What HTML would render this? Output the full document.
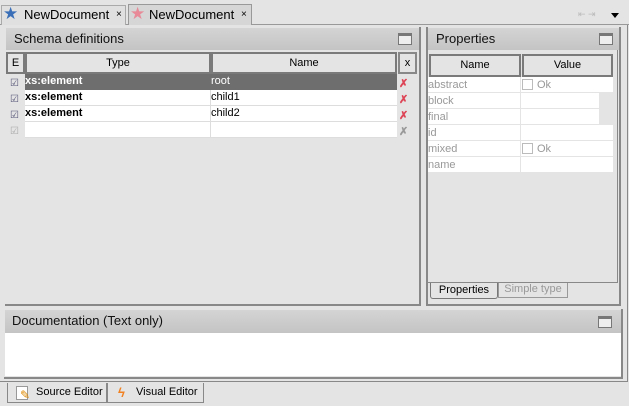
<!DOCTYPE html>
<html><head><style>
*{box-sizing:border-box;margin:0;padding:0}
body{width:629px;height:406px;background:#e4e4e4;font-family:"Liberation Sans",sans-serif;font-size:12px;position:relative;overflow:hidden;color:#000}
.a{position:absolute;white-space:nowrap}
.hdr{background:linear-gradient(#d4d4d4,#c4c4c4);font-size:13px;padding:3px 0 0 8px;color:#111}
.maxi{position:absolute;width:14px;height:12px;border:1px solid #777;border-top:3px solid #777;background:#eee}
.th{position:absolute;background:#e4e4e4;border:2px solid #7a7a7a;text-align:center;font-size:11px;line-height:18px}
.g{color:#999}
.cb{display:inline-block;width:11px;height:11px;border:1px solid #bbb;vertical-align:-2px;margin:0 4px 0 1px}
</style></head><body>
<!-- top tabs -->
<div class="a" style="left:0;top:24px;width:629px;height:1px;background:#999"></div>
<div class="a" style="left:1px;top:5px;width:125px;height:20px;background:#e0e0e0;border:1px solid #aaa;border-bottom:none;font-size:13px;line-height:18px;padding-left:22px">NewDocument<span style="position:absolute;left:114px;font-size:10px">×</span></div>
<div class="a" style="left:3px;top:4px;font-size:17px;color:#3a6fb8">★</div>
<div class="a" style="left:128px;top:4px;width:124px;height:21px;background:#d6d6d6;border:1px solid #999;border-bottom:none;font-size:13px;line-height:19px;padding-left:20px">NewDocument<span style="position:absolute;left:112px;font-size:10px">×</span></div>
<div class="a" style="left:130px;top:4px;font-size:17px;color:#e88a98">★</div>
<div class="a" style="left:578px;top:9px;font-size:9px;color:#bbb">⇤ ⇥</div>
<div class="a" style="left:611px;top:13px;width:0;height:0;border-left:4px solid transparent;border-right:4px solid transparent;border-top:5px solid #000"></div>
<!-- outer content -->
<div class="a" style="left:0;top:25px;width:628px;height:357px;border-right:1px solid #888;border-bottom:1px solid #888"></div>
<!-- schema panel -->
<div class="a" style="left:5px;top:27px;width:416px;height:279px;border-right:2px solid #888;border-bottom:2px solid #888"></div>
<div class="a hdr" style="left:6px;top:28px;width:413px;height:22px">Schema definitions</div>
<div class="maxi" style="left:398px;top:33px"></div>
<div class="th" style="left:6px;top:52px;width:19px;height:22px">E</div>
<div class="th" style="left:25px;top:52px;width:186px;height:22px">Type</div>
<div class="th" style="left:211px;top:52px;width:186px;height:22px">Name</div>
<div class="th" style="left:398px;top:52px;width:19px;height:22px;border-color:#888">x</div>
<div class="a" style="left:25px;top:74px;width:372px;height:16px;background:#6e6e6e;color:#fff;font-size:11px;line-height:15px"><b>xs:element</b><span style="position:absolute;left:186px">root</span></div>
<div class="a" style="left:25px;top:90px;width:372px;height:48px;background:#fff;font-size:11px;line-height:15px">
<div style="height:16px;border-bottom:1px solid #ddd"><b>xs:element</b><span style="position:absolute;left:186px">child1</span></div>
<div style="height:16px;border-bottom:1px solid #ddd;position:relative"><b>xs:element</b><span style="position:absolute;left:186px">child2</span></div>
<div style="height:16px;border-bottom:1px solid #ddd"></div>
<div class="a" style="left:185px;top:0;width:1px;height:48px;background:#ddd"></div>
</div>
<div class="a" style="left:10px;top:76px;font-size:10px;color:#557;line-height:16px">☑<br>☑<br>☑<br><span style="color:#aaa">☑</span></div>
<div class="a" style="left:399px;top:76px;font-size:11px;color:#d45;line-height:16px;font-weight:bold">✗<br>✗<br>✗<br><span style="color:#999">✗</span></div>
<!-- properties panel -->
<div class="a" style="left:426px;top:27px;width:195px;height:279px;border-left:2px solid #888;border-right:2px solid #888;border-bottom:2px solid #888"></div>
<div class="a hdr" style="left:428px;top:28px;width:191px;height:22px">Properties</div>
<div class="maxi" style="left:599px;top:33px"></div>
<div class="a" style="left:426px;top:50px;width:192px;height:233px;border-bottom:1px solid #888;border-right:1px solid #888"></div>
<div class="th" style="left:429px;top:54px;width:92px;height:23px">Name</div>
<div class="th" style="left:522px;top:54px;width:91px;height:23px">Value</div>
<div class="a g" style="left:428px;top:77px;width:185px;font-size:11px;line-height:16px">
<div style="height:16px;background:#fff;border-bottom:1px solid #e4e4e4;position:relative">abstract<span style="position:absolute;left:93px;top:0"><span class="cb"></span>Ok</span></div>
<div style="height:16px;background:#fff;border-bottom:1px solid #e4e4e4;position:relative">block<span style="position:absolute;right:0;width:14px;height:16px;background:#e4e4e4"></span></div>
<div style="height:16px;background:#fff;border-bottom:1px solid #e4e4e4;position:relative">final<span style="position:absolute;right:0;width:14px;height:16px;background:#e4e4e4"></span></div>
<div style="height:16px;background:#fff;border-bottom:1px solid #e4e4e4">id</div>
<div style="height:16px;background:#fff;border-bottom:1px solid #e4e4e4;position:relative">mixed<span style="position:absolute;left:93px;top:0"><span class="cb"></span>Ok</span></div>
<div style="height:16px;background:#fff;border-bottom:1px solid #e4e4e4">name</div>
<div class="a" style="left:92px;top:0;width:1px;height:96px;background:#e4e4e4"></div>
</div>
<div class="a" style="left:430px;top:283px;width:68px;height:16px;border:1px solid #777;border-top:none;border-radius:0 0 3px 3px;font-size:11px;line-height:15px;text-align:center">Properties</div>
<div class="a" style="left:498px;top:283px;width:70px;height:15px;border:1px solid #999;border-top:none;font-size:11px;line-height:13px;text-align:center;color:#999">Simple type</div>
<!-- documentation -->
<div class="a" style="left:4px;top:309px;width:619px;height:70px;border-right:2px solid #888;border-bottom:2px solid #888"></div>
<div class="a hdr" style="left:5px;top:310px;width:616px;height:23px;padding-left:7px">Documentation (Text only)</div>
<div class="maxi" style="left:598px;top:316px"></div>
<div class="a" style="left:5px;top:333px;width:616px;height:43px;background:#fff"></div>
<!-- bottom tabs -->
<div class="a" style="left:7px;top:383px;width:100px;height:20px;border:1px solid #888;border-top:none;font-size:11px;line-height:18px;padding-left:28px">Source Editor</div>
<div class="a" style="left:16px;top:386px;width:12px;height:14px;background:#fff;border:1px solid #999"></div>
<div class="a" style="left:20px;top:388px;font-size:12px;color:#d80">✎</div>
<div class="a" style="left:107px;top:383px;width:97px;height:20px;border:1px solid #888;border-top:none;font-size:11px;line-height:19px;padding-left:28px">Visual Editor</div>
<div class="a" style="left:118px;top:385px;font-size:13px;color:#f08020;font-weight:bold">ϟ</div>
</body></html>
